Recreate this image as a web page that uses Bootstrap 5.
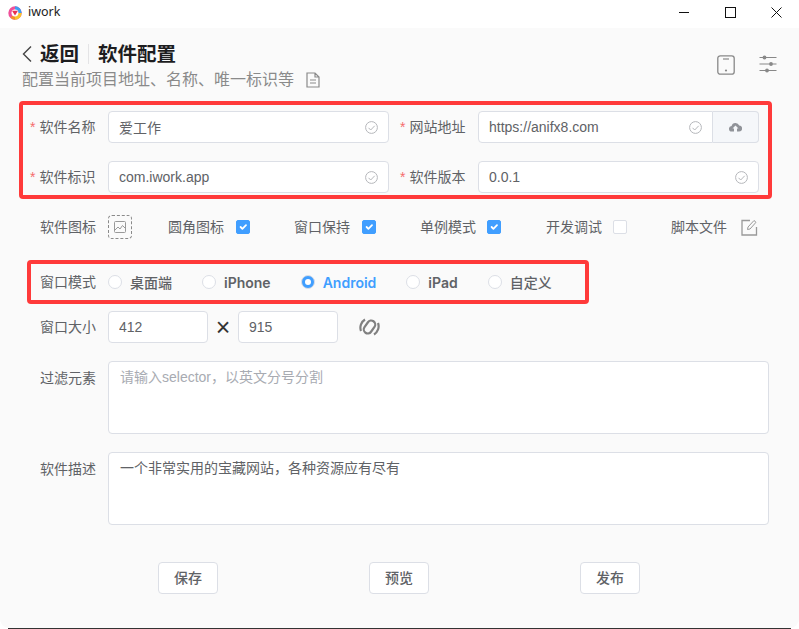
<!DOCTYPE html>
<html lang="zh">
<head>
  <meta charset="UTF-8" />
  <meta name="viewport" content="width=device-width, initial-scale=1.0"/>
  <title>iwork</title>
  <link href="https://cdn.jsdelivr.net/npm/bootstrap@5.3.2/dist/css/bootstrap.min.css" rel="stylesheet">
  <style>
    html, body { height: 629px; overflow: hidden; }
    body { background: #fff; font-family: "Liberation Sans", "Noto Sans CJK SC", sans-serif; font-size: 14px; color: #606266; }
    .title-bar { height: 28px; padding: 0 0 3px 8px; }
    .app-name { font-family: "Noto Sans", sans-serif; font-size: 12.5px; color: #222; margin-left: 6px; }
    .win-btns { gap: 35px; padding-right: 17px; }
    .main-pane { height: 600px; background: #fafafa; border-radius: 0 0 9px 9px; padding: 15px 22px 0 0; }
    .foot-line { height: 1px; background: #333; margin: 0 8px; }
    .page-head { padding-left: 22px; }
    .head-title { font-size: 19.5px; font-weight: 700; color: #1d1d1f; line-height: 22px; }
    .head-sep { width: 1px; height: 20px; background: #e4e4e6; margin: 0 9px; }
    .head-sub { font-size: 16px; line-height: 22px; color: #8a8a8a; margin-top: 4px; }
    .head-doc { margin-left: 12px; }
    .head-tools { gap: 24px; padding-top: 12px; }
    .mark-box { border: 4px solid #ff3a3a; border-radius: 4px; }
    .mark-fields { width: 753px; height: 98px; margin: 10px 0 0 19px; padding: 6px 9px 0 7px; row-gap: 18px; }
    .mark-radios { width: 562px; height: 44px; margin: 21px 0 0 27px; padding-left: 9px; }
    .field-row { height: 32px; }
    .req-label { width: 78px; flex: none; }
    .req-label::before { content: "*"; color: #f56c6c; margin-right: 4px; }
    .second-label { width: 89px; flex: none; padding-left: 11px; }
    .plain-label { width: 56px; flex: none; }
    .input-box { position: relative; }
    .form-control.ui-input { height: 32px; min-height: 0; border-color: #dcdfe6; border-radius: 4px; color: #606266; font-size: 14px; padding: 0 30px 0 10px; background: #fff; box-shadow: none; }
    .input-box .tick-ok { position: absolute; right: 11px; top: 10px; z-index: 5; }
    .cloud-btn { width: 46px; height: 32px; background: #f5f7fa; border: 1px solid #dcdfe6; border-left: 0; border-radius: 0 4px 4px 0; }
    .w-name { width: 281px; }
    .w-url { width: 235px; }
    .w-url .form-control.ui-input { border-radius: 4px 0 0 4px; }
    .w-ver { width: 281px; }
    .opt-row { height: 24px; margin: 16px 0 0 40px; }
    .icon-drop { width: 24px; height: 24px; border: 1px dashed #8a8a8a; border-radius: 4px; margin: 0 36px 0 12px; }
    .opt-item { width: 126px; flex: none; }
    .opt-item.opt-short { width: 125px; }
    .opt-item .form-check-input { width: 14px; height: 14px; margin: 0 0 0 12px; border-color: #dcdfe6; border-radius: 2px; background-size: 12px; float: none; }
    .opt-tight .form-check-input.form-check-input { margin-left: 11px; }
    .script-edit { margin-left: 14px; }
    .form-check-input:checked { background-color: #409eff; border-color: #409eff; }
    .mode-item { gap: 8px; margin-right: 30px; font-family: "Inter", "Noto Sans CJK SC", sans-serif; font-weight: 600; }
    .mode-item.mode-cjk { font-weight: 500; }
    .mode-item .form-check-input { width: 14px; height: 14px; margin: 0; border-color: #dcdfe6; float: none; }
    .mode-on { color: #409eff; }
    .mode-list { margin-left: 12px; }
    .size-row { margin: 7px 0 0 40px; height: 32px; }
    .size-input { width: 100px; }
    .size-x { width: 30px; text-align: center; color: #333; font-size: 25px; font-weight: 300; line-height: 32px; }
    .size-swap { margin-left: 21px; }
    .area-row { margin: 18px 0 0 40px; }
    .area-row .plain-label { width: 68px; padding-top: 7px; line-height: 20px; }
    .form-control.ui-area { width: 661px; height: 73px; resize: none; border-color: #dcdfe6; border-radius: 4px; color: #606266; font-size: 14px; line-height: 20px; padding: 5px 11px; box-shadow: none; }
    .ui-area::placeholder { color: #a8abb2; opacity: 1; }
    .foot-btns { margin: 37px 0 0 158px; gap: 151px; }
    .btn.act-btn { width: 60px; height: 32px; padding: 0; background: #fff; border: 1px solid #dcdfe6; border-radius: 4px; color: #606266; font-size: 14px; font-weight: 500; }
  </style>
</head>
<body>
  <div class="title-bar d-flex align-items-center justify-content-between">
    <div class="d-flex align-items-center">
      <svg width="14" height="14" viewBox="0 0 14 14">
        <circle cx="7" cy="7" r="5" fill="none" stroke="#f0509a" stroke-width="3.400"/>
        <path d="M7 2a5 5 0 0 1 5 5" fill="none" stroke="#3f9df0" stroke-width="3.400"/>
        <path d="M12 7a5 5 0 0 1-5 5" fill="none" stroke="#f8c52b" stroke-width="3.400"/>
        <path d="M7 12a5 5 0 0 1-3.500-1.400" fill="none" stroke="#f4902a" stroke-width="3.400"/>
        <circle cx="7" cy="7" r="3.400" fill="#fff"/>
        <path d="M4 4.800h6L7 9.600z" fill="#e8304f"/>
      </svg>
      <span class="app-name">iwork</span>
    </div>
    <div class="win-btns d-flex align-items-center">
      <svg width="11" height="11" viewBox="0 0 11 11"><path d="M0 5.500h10" stroke="#111" fill="none"/></svg>
      <svg width="11" height="11" viewBox="0 0 11 11"><rect x=".5" y=".5" width="10" height="10" stroke="#111" fill="none"/></svg>
      <svg width="11" height="11" viewBox="0 0 11 11"><path d="M.5.500l10 10M10.500.500l-10 10" stroke="#111" fill="none"/></svg>
    </div>
  </div>

  <div class="main-pane">
    <div class="page-head d-flex justify-content-between align-items-start">
      <div>
        <div class="d-flex align-items-center head-title">
          <svg class="me-2" width="10" height="18" viewBox="0 0 10 18"><path d="M9 1.500 1.500 9 9 16.500" stroke="#444" stroke-width="1.400" fill="none"/></svg>
          <span>返回</span>
          <span class="head-sep"></span>
          <span>软件配置</span>
        </div>
        <div class="head-sub d-flex align-items-center">
          配置当前项目地址、名称、唯一标识等
          <svg class="head-doc" width="14" height="16" viewBox="0 0 14 16"><path d="M1 1h8l4 4v10H1zM9 1v4h4M4 8h6M4 11h6" stroke="#8a8a8a" stroke-width="1.200" fill="none"/></svg>
        </div>
      </div>
      <div class="head-tools d-flex">
        <svg width="18" height="20" viewBox="0 0 18 20"><rect x=".8" y=".8" width="16.400" height="18.400" rx="2.500" stroke="#888" stroke-width="1.300" fill="none"/><path d="M6 4h6" stroke="#888" stroke-width="1.200"/><circle cx="9" cy="15.500" r="1.100" fill="#888"/></svg>
        <svg width="18" height="18" viewBox="0 0 18 18"><path d="M.5 2.500h17M.5 9h17M.5 15.500h17" stroke="#888" stroke-width="1.200"/><circle cx="5.500" cy="2.500" r="1.900" fill="#888"/><circle cx="12" cy="9" r="1.900" fill="#888"/><circle cx="8" cy="15.500" r="1.900" fill="#888"/></svg>
      </div>
    </div>

    <div class="mark-box mark-fields d-flex flex-column">
      <div class="field-row d-flex align-items-center">
        <label class="req-label">软件名称</label>
        <div class="input-box w-name"><input class="form-control ui-input" value="爱工作">
          <svg class="tick-ok" width="13" height="13" viewBox="0 0 13 13"><circle cx="6.500" cy="6.500" r="5.900" stroke="#b5b7bb" fill="none"/><path d="M3.500 6.800 5.700 9l4-4.200" stroke="#b5b7bb" fill="none"/></svg></div>
        <label class="req-label second-label">网站地址</label>
        <div class="d-flex">
          <div class="input-box w-url"><input class="form-control ui-input" value="https://anifx8.com">
            <svg class="tick-ok" width="13" height="13" viewBox="0 0 13 13"><circle cx="6.500" cy="6.500" r="5.900" stroke="#b5b7bb" fill="none"/><path d="M3.500 6.800 5.700 9l4-4.200" stroke="#b5b7bb" fill="none"/></svg></div>
          <div class="cloud-btn d-flex align-items-center justify-content-center">
            <svg width="13" height="10" viewBox="0 0 13 10"><path d="M3 9.500a2.800 2.800 0 0 1-.4-5.600A4 4 0 0 1 10.200 3.500 3 3 0 0 1 10 9.500H8V6.500h1.500l-3-3-3 3H5v3z" fill="#909399"/></svg>
          </div>
        </div>
      </div>
      <div class="field-row d-flex align-items-center">
        <label class="req-label">软件标识</label>
        <div class="input-box w-name"><input class="form-control ui-input" value="com.iwork.app">
          <svg class="tick-ok" width="13" height="13" viewBox="0 0 13 13"><circle cx="6.500" cy="6.500" r="5.900" stroke="#b5b7bb" fill="none"/><path d="M3.500 6.800 5.700 9l4-4.200" stroke="#b5b7bb" fill="none"/></svg></div>
        <label class="req-label second-label">软件版本</label>
        <div class="input-box w-ver"><input class="form-control ui-input" value="0.0.1">
          <svg class="tick-ok" width="13" height="13" viewBox="0 0 13 13"><circle cx="6.500" cy="6.500" r="5.900" stroke="#b5b7bb" fill="none"/><path d="M3.500 6.800 5.700 9l4-4.200" stroke="#b5b7bb" fill="none"/></svg></div>
      </div>
    </div>

    <div class="opt-row d-flex align-items-center">
      <label class="plain-label">软件图标</label>
      <div class="icon-drop d-flex align-items-center justify-content-center">
        <svg width="12" height="12" viewBox="0 0 12 12"><rect x=".5" y=".5" width="11" height="11" rx="1" stroke="#999" fill="none"/><path d="M1 9l3-3 2 2 2.500-3.500L11 7" stroke="#999" fill="none"/></svg>
      </div>
      <div class="opt-item d-flex align-items-center"><span>圆角图标</span><input class="form-check-input" type="checkbox" checked></div>
      <div class="opt-item d-flex align-items-center"><span>窗口保持</span><input class="form-check-input" type="checkbox" checked></div>
      <div class="opt-item opt-tight d-flex align-items-center"><span>单例模式</span><input class="form-check-input" type="checkbox" checked></div>
      <div class="opt-item opt-tight opt-short d-flex align-items-center"><span>开发调试</span><input class="form-check-input" type="checkbox"></div>
      <div class="d-flex align-items-center"><span>脚本文件</span>
        <svg class="script-edit" width="17" height="17" viewBox="0 0 17 17"><path d="M9 1.500H1v14.500h14.500V8" stroke="#999" stroke-width="1.300" fill="none"/><path d="M6.500 10.500 7 8l6-6.500 2 1.800-6 6.700z" stroke="#999" fill="none"/></svg>
      </div>
    </div>

    <div class="mark-box mark-radios d-flex align-items-center">
      <label class="plain-label">窗口模式</label>
      <div class="mode-list d-flex align-items-center">
        <div class="mode-item mode-cjk d-flex align-items-center"><input class="form-check-input" type="radio" name="mode"><span>桌面端</span></div>
        <div class="mode-item d-flex align-items-center"><input class="form-check-input" type="radio" name="mode"><span>iPhone</span></div>
        <div class="mode-item mode-on d-flex align-items-center"><input class="form-check-input" type="radio" name="mode" checked><span>Android</span></div>
        <div class="mode-item d-flex align-items-center"><input class="form-check-input" type="radio" name="mode"><span>iPad</span></div>
        <div class="mode-item mode-cjk d-flex align-items-center"><input class="form-check-input" type="radio" name="mode"><span>自定义</span></div>
      </div>
    </div>

    <div class="size-row d-flex align-items-center">
      <label class="plain-label me-2">窗口大小</label>
      <div class="size-input ms-1"><input class="form-control ui-input" value="412"></div>
      <span class="size-x">×</span>
      <div class="size-input"><input class="form-control ui-input" value="915"></div>
      <svg class="size-swap" width="21" height="20" viewBox="0 0 21 20"><g fill="none" stroke="#808080" stroke-width="2.200"><rect x="6.500" y="3" width="8" height="14" rx="4" transform="rotate(35 10.500 10)"/><path d="M2 14A9.500 9.500 0 0 1 6 2.500M19 6A9.500 9.500 0 0 1 15 17.500"/></g></svg>
    </div>

    <div class="area-row d-flex">
      <label class="plain-label">过滤元素</label>
      <textarea class="form-control ui-area" placeholder="请输入selector，以英文分号分割"></textarea>
    </div>
    <div class="area-row d-flex">
      <label class="plain-label">软件描述</label>
      <textarea class="form-control ui-area">一个非常实用的宝藏网站，各种资源应有尽有</textarea>
    </div>

    <div class="foot-btns d-flex">
      <button class="btn act-btn">保存</button>
      <button class="btn act-btn">预览</button>
      <button class="btn act-btn">发布</button>
    </div>
  </div>
  <div class="foot-line"></div>
  <script src="https://cdn.jsdelivr.net/npm/bootstrap@5.3.2/dist/js/bootstrap.bundle.min.js"></script>
</body>
</html>
